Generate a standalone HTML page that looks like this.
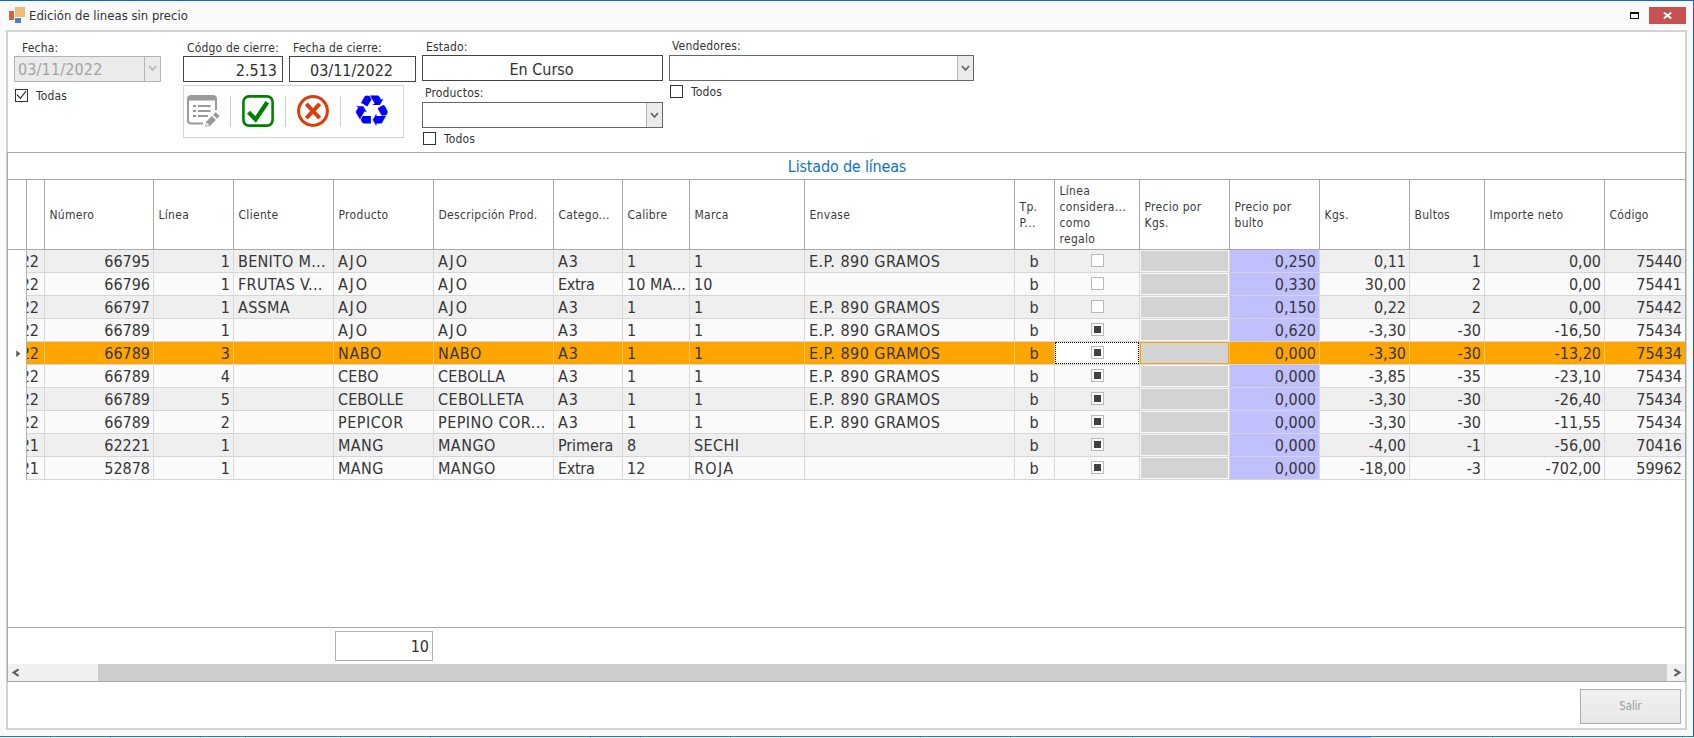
<!DOCTYPE html>
<html lang="es"><head><meta charset="utf-8"><title>Edición de lineas sin precio</title>
<style>
html,body{margin:0;padding:0}
body{width:1694px;height:738px;position:relative;overflow:hidden;background:#fafafa;font-family:"DejaVu Sans Condensed","Liberation Sans",sans-serif;color:#333;-webkit-font-smoothing:antialiased}
.a{position:absolute;box-sizing:border-box;white-space:nowrap}
.lbl{font-size:12px;letter-spacing:.17px;line-height:14px;color:#333}
.t16{font-size:16px;line-height:22px;color:#303030}
.inp{background:#fff;border:1px solid #444}
.cb{width:13px;height:13px;border:1px solid #333;background:#fff}
.vl{width:1px;background:#a9a9a9}
.hl{height:1px;background:#a9a9a9}
.dvl{width:1px;background:#d9d9d9}
.dhl{height:1px;background:#d6d6d6}
.hd{font-size:12px;letter-spacing:.3px;line-height:16px;color:#3c3c3c;display:flex;align-items:center;white-space:normal;padding-left:4.5px}
.c{font-size:16px;line-height:24px;height:22px;color:#363636;overflow:hidden}
.r{text-align:right;padding-right:3px}
.l{text-align:left;padding-left:4px}
.ctr{text-align:center;padding-right:1px}
.gck{width:13px;height:13px;border:1px solid #b9b9b9;background:#fff}
.gck i{position:absolute;left:2px;top:2px;width:7px;height:7px;background:#404040}
.ddb{background:#ebebeb;border-left:1px solid #b5b5b5}

</style></head><body>
<div class="a" style="left:0;top:0;width:1694px;height:1px;background:#0f6acb"></div>
<div class="a" style="left:1693px;top:0;width:1px;height:737px;background:#0f6acb"></div>
<div class="a" style="left:0;top:736px;width:1694px;height:1px;background:#1b7ad0"></div>
<div class="a" style="left:0;top:737px;width:1694px;height:1px;background:#fdfdfd"></div>
<div class="a" style="left:1250px;top:737px;width:121px;height:1px;background:#c4c4ff"></div>
<div class="a" style="left:50px;top:737px;width:1px;height:1px;background:#c8c8c8"></div>
<div class="a" style="left:110px;top:737px;width:1px;height:1px;background:#c8c8c8"></div>
<div class="a" style="left:200px;top:737px;width:1px;height:1px;background:#c8c8c8"></div>
<div class="a" style="left:245px;top:737px;width:1px;height:1px;background:#c8c8c8"></div>
<div class="a" style="left:340px;top:737px;width:1px;height:1px;background:#c8c8c8"></div>
<div class="a" style="left:430px;top:737px;width:1px;height:1px;background:#c8c8c8"></div>
<div class="a" style="left:590px;top:737px;width:1px;height:1px;background:#c8c8c8"></div>
<div class="a" style="left:640px;top:737px;width:1px;height:1px;background:#c8c8c8"></div>
<div class="a" style="left:730px;top:737px;width:1px;height:1px;background:#c8c8c8"></div>
<div class="a" style="left:780px;top:737px;width:1px;height:1px;background:#c8c8c8"></div>
<div class="a" style="left:920px;top:737px;width:1px;height:1px;background:#c8c8c8"></div>
<div class="a" style="left:1010px;top:737px;width:1px;height:1px;background:#c8c8c8"></div>
<div class="a" style="left:1132px;top:737px;width:1px;height:1px;background:#c8c8c8"></div>
<div class="a" style="left:1492px;top:737px;width:1px;height:1px;background:#c8c8c8"></div>
<div class="a" style="left:1572px;top:737px;width:1px;height:1px;background:#c8c8c8"></div>
<div class="a" style="left:1682px;top:737px;width:1px;height:1px;background:#c8c8c8"></div>
<div class="a" style="left:9px;top:11px;width:5px;height:9px;background:#dc5f3c"></div>
<div class="a" style="left:15px;top:7px;width:10px;height:10px;background:#ecbd77"></div>
<div class="a" style="left:15px;top:18px;width:6px;height:5px;background:#4a7fc1"></div>
<div class="a" style="left:29px;top:7px;font-size:13px;line-height:17px;color:#333">Edición de lineas sin precio</div>
<div class="a" style="left:1630px;top:12px;width:9px;height:7px;border:1px solid #111;border-top-width:2px"></div>
<div class="a" style="left:1649px;top:7px;width:37px;height:17px;background:#c75050"></div>
<svg class="a" style="left:1662px;top:11px" width="11" height="9" viewBox="0 0 11 9"><path d="M1.8 1.4 L9.2 7.6 M9.2 1.4 L1.8 7.6" stroke="#fff" stroke-width="1.9" fill="none"/></svg>
<div class="a" style="left:6px;top:30px;width:1681px;height:700px;border:2px solid #d2d2d2;background:#fff"></div>
<div class="a lbl" style="left:22px;top:41px">Fecha:</div>
<div class="a" style="left:14px;top:56px;width:147px;height:26px;border:1px solid #b4b4b4;background:#ebebeb"></div>
<div class="a t16" style="left:18px;top:59px;color:#a3a3a3;letter-spacing:.15px">03/11/2022</div>
<div class="a" style="left:144px;top:57px;width:1px;height:24px;background:#b4b4b4"></div>
<svg class="a" style="left:148px;top:65px" width="9" height="7" viewBox="0 0 9 7"><path d="M1 1 L4.5 5 L8 1" stroke="#b5b5b5" stroke-width="1.6" fill="none"/></svg>
<div class="a cb" style="left:15px;top:89px"></div>
<svg class="a" style="left:15px;top:89px" width="13" height="13" viewBox="0 0 13 13"><path d="M2 5.6 L5.4 9.3 L11 2" stroke="#222" stroke-width="1.15" fill="none"/></svg>
<div class="a lbl" style="left:36px;top:89px">Todas</div>
<div class="a lbl" style="left:187px;top:41px">Códgo de cierre:</div>
<div class="a inp" style="left:183px;top:56px;width:100px;height:26px"></div>
<div class="a t16" style="left:183px;top:60px;width:94px;text-align:right">2.513</div>
<div class="a lbl" style="left:293px;top:41px">Fecha de cierre:</div>
<div class="a inp" style="left:289px;top:56px;width:127px;height:26px"></div>
<div class="a t16" style="left:289px;top:60px;width:127px;text-align:center;text-indent:-2px">03/11/2022</div>
<div class="a lbl" style="left:426px;top:40px">Estado:</div>
<div class="a inp" style="left:422px;top:55px;width:241px;height:26px"></div>
<div class="a t16" style="left:421px;top:59px;width:241px;text-align:center">En Curso</div>
<div class="a lbl" style="left:425px;top:86px">Productos:</div>
<div class="a inp" style="left:422px;top:102px;width:241px;height:26px;border-color:#666"></div>
<div class="a ddb" style="left:646px;top:103px;width:16px;height:24px"></div>
<svg class="a" style="left:650px;top:112px" width="9" height="7" viewBox="0 0 9 7"><path d="M1 1 L4.5 5 L8 1" stroke="#666" stroke-width="1.8" fill="none"/></svg>
<div class="a cb" style="left:423px;top:132px"></div>
<div class="a lbl" style="left:444px;top:132px">Todos</div>
<div class="a lbl" style="left:672px;top:39px">Vendedores:</div>
<div class="a inp" style="left:669px;top:55px;width:305px;height:26px;border-color:#666"></div>
<div class="a ddb" style="left:957px;top:56px;width:16px;height:24px"></div>
<svg class="a" style="left:961px;top:65px" width="9" height="7" viewBox="0 0 9 7"><path d="M1 1 L4.5 5 L8 1" stroke="#666" stroke-width="1.8" fill="none"/></svg>
<div class="a cb" style="left:670px;top:85px"></div>
<div class="a lbl" style="left:691px;top:85px">Todos</div>
<div class="a" style="left:183px;top:85px;width:221px;height:53px;border:1px solid #d4d4d4;background:#fefefe"></div>
<div class="a" style="left:230px;top:96px;width:1px;height:31px;background:#d0d0d0"></div>
<div class="a" style="left:285px;top:96px;width:1px;height:31px;background:#d0d0d0"></div>
<div class="a" style="left:340px;top:96px;width:1px;height:31px;background:#d0d0d0"></div>
<svg class="a" style="left:187px;top:95px" width="33" height="32" viewBox="0 0 33 32"><path d="M16 28.5 H4 A3 3 0 0 1 1 25.5 V4 A3 3 0 0 1 4 1 H26 A3 3 0 0 1 29 4 V15" fill="none" stroke="#9a9a9a" stroke-width="2"/><rect x="1" y="1" width="28" height="4.5" fill="#9a9a9a"/><g fill="#9a9a9a"><rect x="6" y="10" width="3" height="2"/><rect x="11" y="10" width="12.5" height="2"/><rect x="6" y="15" width="3" height="2"/><rect x="11" y="15" width="12.5" height="2"/><rect x="6" y="20" width="3" height="2"/><rect x="11" y="20" width="10" height="2"/></g><path d="M18.2 31.8 L19.2 26.7 L24.9 21 L28.9 25 L23.2 30.7 Z M26.1 19.8 L28.7 17.2 L32.6 21.1 L30 23.7 Z" fill="#9a9a9a"/><path d="M19.9 27.6 L22.3 30 L19.2 30.8 Z" fill="#fff"/></svg>
<svg class="a" style="left:242px;top:95px" width="32" height="32" viewBox="0 0 32 32"><rect x="1.4" y="1.4" width="29.2" height="29.2" rx="5.5" fill="none" stroke="#008000" stroke-width="2.6"/><path d="M6.5 17.3 L13.6 24.4 L25.3 7.2" fill="none" stroke="#008000" stroke-width="4.3"/></svg>
<svg class="a" style="left:297px;top:95px" width="32" height="32" viewBox="0 0 32 32"><circle cx="16" cy="16" r="14.4" fill="none" stroke="#df3c05" stroke-width="3"/><path d="M9.3 8.8 L22.7 23.2 M22.7 8.8 L9.3 23.2" stroke="#df3c05" stroke-width="3.9" fill="none"/></svg>
<div class="a" style="left:346.5px;top:86.2px;width:50px;height:50px;font-family:'DejaVu Sans',sans-serif;font-size:43.5px;line-height:50px;color:#0000ff;text-align:center">♻</div>
<div class="a" style="left:7px;top:152px;width:1679px;height:530px;border:1px solid #a9a9a9;background:#fff"></div>
<div class="a t16" style="left:9px;top:155px;width:1676px;text-align:center;color:#0f72c6;line-height:24px;letter-spacing:-.18px">Listado de líneas</div>
<div class="a hl" style="left:8px;top:179px;width:1677px"></div>
<div class="a hl" style="left:8px;top:249px;width:1677px"></div>
<div class="a vl" style="left:26px;top:180px;height:69px"></div>
<div class="a vl" style="left:44px;top:180px;height:69px"></div>
<div class="a hd" style="left:45px;top:180px;width:108px;height:69px"><span>Número</span></div>
<div class="a vl" style="left:153px;top:180px;height:69px"></div>
<div class="a hd" style="left:154px;top:180px;width:79px;height:69px"><span>Línea</span></div>
<div class="a vl" style="left:233px;top:180px;height:69px"></div>
<div class="a hd" style="left:234px;top:180px;width:99px;height:69px"><span>Cliente</span></div>
<div class="a vl" style="left:333px;top:180px;height:69px"></div>
<div class="a hd" style="left:334px;top:180px;width:99px;height:69px"><span>Producto</span></div>
<div class="a vl" style="left:433px;top:180px;height:69px"></div>
<div class="a hd" style="left:434px;top:180px;width:119px;height:69px"><span>Descripción Prod.</span></div>
<div class="a vl" style="left:553px;top:180px;height:69px"></div>
<div class="a hd" style="left:554px;top:180px;width:68px;height:69px"><span>Catego...</span></div>
<div class="a vl" style="left:622px;top:180px;height:69px"></div>
<div class="a hd" style="left:623px;top:180px;width:66px;height:69px"><span>Calibre</span></div>
<div class="a vl" style="left:689px;top:180px;height:69px"></div>
<div class="a hd" style="left:690px;top:180px;width:114px;height:69px"><span>Marca</span></div>
<div class="a vl" style="left:804px;top:180px;height:69px"></div>
<div class="a hd" style="left:805px;top:180px;width:209px;height:69px"><span>Envase</span></div>
<div class="a vl" style="left:1014px;top:180px;height:69px"></div>
<div class="a hd" style="left:1015px;top:180px;width:39px;height:69px"><span>Tp.<br>P...</span></div>
<div class="a vl" style="left:1054px;top:180px;height:69px"></div>
<div class="a hd" style="left:1055px;top:180px;width:84px;height:69px"><span>Línea<br>considera...<br>como<br>regalo</span></div>
<div class="a vl" style="left:1139px;top:180px;height:69px"></div>
<div class="a hd" style="left:1140px;top:180px;width:89px;height:69px"><span>Precio por<br>Kgs.</span></div>
<div class="a vl" style="left:1229px;top:180px;height:69px"></div>
<div class="a hd" style="left:1230px;top:180px;width:89px;height:69px"><span>Precio por<br>bulto</span></div>
<div class="a vl" style="left:1319px;top:180px;height:69px"></div>
<div class="a hd" style="left:1320px;top:180px;width:89px;height:69px"><span>Kgs.</span></div>
<div class="a vl" style="left:1409px;top:180px;height:69px"></div>
<div class="a hd" style="left:1410px;top:180px;width:74px;height:69px"><span>Bultos</span></div>
<div class="a vl" style="left:1484px;top:180px;height:69px"></div>
<div class="a hd" style="left:1485px;top:180px;width:119px;height:69px"><span>Importe neto</span></div>
<div class="a vl" style="left:1604px;top:180px;height:69px"></div>
<div class="a hd" style="left:1605px;top:180px;width:80px;height:69px"><span>Código</span></div>
<div class="a" style="left:27px;top:250px;width:1658px;height:22px;background:#efefef"></div>
<div class="a dhl" style="left:27px;top:272px;width:1658px"></div>
<div class="a c" style="left:27px;top:250px;width:17px"><span class="a" style="right:5px;top:0">2022</span></div>
<div class="a dvl" style="left:44px;top:250px;height:22px"></div>
<div class="a c r" style="left:45px;top:250px;width:108px">66795</div>
<div class="a dvl" style="left:153px;top:250px;height:22px"></div>
<div class="a c r" style="left:154px;top:250px;width:79px">1</div>
<div class="a dvl" style="left:233px;top:250px;height:22px"></div>
<div class="a c l" style="left:234px;top:250px;width:99px;letter-spacing:0.27px">BENITO M...</div>
<div class="a dvl" style="left:333px;top:250px;height:22px"></div>
<div class="a c l" style="left:334px;top:250px;width:99px;letter-spacing:1.78px">AJO</div>
<div class="a dvl" style="left:433px;top:250px;height:22px"></div>
<div class="a c l" style="left:434px;top:250px;width:119px;letter-spacing:1.78px">AJO</div>
<div class="a dvl" style="left:553px;top:250px;height:22px"></div>
<div class="a c l" style="left:554px;top:250px;width:68px;letter-spacing:0.88px">A3</div>
<div class="a dvl" style="left:622px;top:250px;height:22px"></div>
<div class="a c l" style="left:623px;top:250px;width:66px">1</div>
<div class="a dvl" style="left:689px;top:250px;height:22px"></div>
<div class="a c l" style="left:690px;top:250px;width:114px">1</div>
<div class="a dvl" style="left:804px;top:250px;height:22px"></div>
<div class="a c l" style="left:805px;top:250px;width:209px;letter-spacing:0.48px">E.P. 890 GRAMOS</div>
<div class="a dvl" style="left:1014px;top:250px;height:22px"></div>
<div class="a c ctr" style="left:1015px;top:250px;width:39px">b</div>
<div class="a dvl" style="left:1054px;top:250px;height:22px"></div>
<div class="a gck" style="left:1091px;top:254px"></div>
<div class="a dvl" style="left:1139px;top:250px;height:22px"></div>
<div class="a" style="left:1140px;top:250px;width:89px;height:22px;border:1px solid #f4f4f4;background:#d3d3d3"></div>
<div class="a dvl" style="left:1229px;top:250px;height:22px"></div>
<div class="a c r" style="left:1230px;top:250px;width:89px;background:#c0c0ff">0,250</div>
<div class="a dvl" style="left:1319px;top:250px;height:22px"></div>
<div class="a c r" style="left:1320px;top:250px;width:89px">0,11</div>
<div class="a dvl" style="left:1409px;top:250px;height:22px"></div>
<div class="a c r" style="left:1410px;top:250px;width:74px">1</div>
<div class="a dvl" style="left:1484px;top:250px;height:22px"></div>
<div class="a c r" style="left:1485px;top:250px;width:119px">0,00</div>
<div class="a dvl" style="left:1604px;top:250px;height:22px"></div>
<div class="a c r" style="left:1605px;top:250px;width:80px">75440</div>
<div class="a" style="left:27px;top:273px;width:1658px;height:22px;background:#fafafa"></div>
<div class="a dhl" style="left:27px;top:295px;width:1658px"></div>
<div class="a c" style="left:27px;top:273px;width:17px"><span class="a" style="right:5px;top:0">2022</span></div>
<div class="a dvl" style="left:44px;top:273px;height:22px"></div>
<div class="a c r" style="left:45px;top:273px;width:108px">66796</div>
<div class="a dvl" style="left:153px;top:273px;height:22px"></div>
<div class="a c r" style="left:154px;top:273px;width:79px">1</div>
<div class="a dvl" style="left:233px;top:273px;height:22px"></div>
<div class="a c l" style="left:234px;top:273px;width:99px;letter-spacing:0.30px">FRUTAS V...</div>
<div class="a dvl" style="left:333px;top:273px;height:22px"></div>
<div class="a c l" style="left:334px;top:273px;width:99px;letter-spacing:1.78px">AJO</div>
<div class="a dvl" style="left:433px;top:273px;height:22px"></div>
<div class="a c l" style="left:434px;top:273px;width:119px;letter-spacing:1.78px">AJO</div>
<div class="a dvl" style="left:553px;top:273px;height:22px"></div>
<div class="a c l" style="left:554px;top:273px;width:68px;letter-spacing:-0.30px">Extra</div>
<div class="a dvl" style="left:622px;top:273px;height:22px"></div>
<div class="a c l" style="left:623px;top:273px;width:66px;letter-spacing:0.05px">10 MA...</div>
<div class="a dvl" style="left:689px;top:273px;height:22px"></div>
<div class="a c l" style="left:690px;top:273px;width:114px">10</div>
<div class="a dvl" style="left:804px;top:273px;height:22px"></div>
<div class="a c l" style="left:805px;top:273px;width:209px"></div>
<div class="a dvl" style="left:1014px;top:273px;height:22px"></div>
<div class="a c ctr" style="left:1015px;top:273px;width:39px">b</div>
<div class="a dvl" style="left:1054px;top:273px;height:22px"></div>
<div class="a gck" style="left:1091px;top:277px"></div>
<div class="a dvl" style="left:1139px;top:273px;height:22px"></div>
<div class="a" style="left:1140px;top:273px;width:89px;height:22px;border:1px solid #fcfcfc;background:#d3d3d3"></div>
<div class="a dvl" style="left:1229px;top:273px;height:22px"></div>
<div class="a c r" style="left:1230px;top:273px;width:89px;background:#c0c0ff">0,330</div>
<div class="a dvl" style="left:1319px;top:273px;height:22px"></div>
<div class="a c r" style="left:1320px;top:273px;width:89px">30,00</div>
<div class="a dvl" style="left:1409px;top:273px;height:22px"></div>
<div class="a c r" style="left:1410px;top:273px;width:74px">2</div>
<div class="a dvl" style="left:1484px;top:273px;height:22px"></div>
<div class="a c r" style="left:1485px;top:273px;width:119px">0,00</div>
<div class="a dvl" style="left:1604px;top:273px;height:22px"></div>
<div class="a c r" style="left:1605px;top:273px;width:80px">75441</div>
<div class="a" style="left:27px;top:296px;width:1658px;height:22px;background:#efefef"></div>
<div class="a dhl" style="left:27px;top:318px;width:1658px"></div>
<div class="a c" style="left:27px;top:296px;width:17px"><span class="a" style="right:5px;top:0">2022</span></div>
<div class="a dvl" style="left:44px;top:296px;height:22px"></div>
<div class="a c r" style="left:45px;top:296px;width:108px">66797</div>
<div class="a dvl" style="left:153px;top:296px;height:22px"></div>
<div class="a c r" style="left:154px;top:296px;width:79px">1</div>
<div class="a dvl" style="left:233px;top:296px;height:22px"></div>
<div class="a c l" style="left:234px;top:296px;width:99px;letter-spacing:0.30px">ASSMA</div>
<div class="a dvl" style="left:333px;top:296px;height:22px"></div>
<div class="a c l" style="left:334px;top:296px;width:99px;letter-spacing:1.78px">AJO</div>
<div class="a dvl" style="left:433px;top:296px;height:22px"></div>
<div class="a c l" style="left:434px;top:296px;width:119px;letter-spacing:1.78px">AJO</div>
<div class="a dvl" style="left:553px;top:296px;height:22px"></div>
<div class="a c l" style="left:554px;top:296px;width:68px;letter-spacing:0.88px">A3</div>
<div class="a dvl" style="left:622px;top:296px;height:22px"></div>
<div class="a c l" style="left:623px;top:296px;width:66px">1</div>
<div class="a dvl" style="left:689px;top:296px;height:22px"></div>
<div class="a c l" style="left:690px;top:296px;width:114px">1</div>
<div class="a dvl" style="left:804px;top:296px;height:22px"></div>
<div class="a c l" style="left:805px;top:296px;width:209px;letter-spacing:0.48px">E.P. 890 GRAMOS</div>
<div class="a dvl" style="left:1014px;top:296px;height:22px"></div>
<div class="a c ctr" style="left:1015px;top:296px;width:39px">b</div>
<div class="a dvl" style="left:1054px;top:296px;height:22px"></div>
<div class="a gck" style="left:1091px;top:300px"></div>
<div class="a dvl" style="left:1139px;top:296px;height:22px"></div>
<div class="a" style="left:1140px;top:296px;width:89px;height:22px;border:1px solid #f4f4f4;background:#d3d3d3"></div>
<div class="a dvl" style="left:1229px;top:296px;height:22px"></div>
<div class="a c r" style="left:1230px;top:296px;width:89px;background:#c0c0ff">0,150</div>
<div class="a dvl" style="left:1319px;top:296px;height:22px"></div>
<div class="a c r" style="left:1320px;top:296px;width:89px">0,22</div>
<div class="a dvl" style="left:1409px;top:296px;height:22px"></div>
<div class="a c r" style="left:1410px;top:296px;width:74px">2</div>
<div class="a dvl" style="left:1484px;top:296px;height:22px"></div>
<div class="a c r" style="left:1485px;top:296px;width:119px">0,00</div>
<div class="a dvl" style="left:1604px;top:296px;height:22px"></div>
<div class="a c r" style="left:1605px;top:296px;width:80px">75442</div>
<div class="a" style="left:27px;top:319px;width:1658px;height:22px;background:#fafafa"></div>
<div class="a dhl" style="left:27px;top:341px;width:1658px"></div>
<div class="a c" style="left:27px;top:319px;width:17px"><span class="a" style="right:5px;top:0">2022</span></div>
<div class="a dvl" style="left:44px;top:319px;height:22px"></div>
<div class="a c r" style="left:45px;top:319px;width:108px">66789</div>
<div class="a dvl" style="left:153px;top:319px;height:22px"></div>
<div class="a c r" style="left:154px;top:319px;width:79px">1</div>
<div class="a dvl" style="left:233px;top:319px;height:22px"></div>
<div class="a c l" style="left:234px;top:319px;width:99px"></div>
<div class="a dvl" style="left:333px;top:319px;height:22px"></div>
<div class="a c l" style="left:334px;top:319px;width:99px;letter-spacing:1.78px">AJO</div>
<div class="a dvl" style="left:433px;top:319px;height:22px"></div>
<div class="a c l" style="left:434px;top:319px;width:119px;letter-spacing:1.78px">AJO</div>
<div class="a dvl" style="left:553px;top:319px;height:22px"></div>
<div class="a c l" style="left:554px;top:319px;width:68px;letter-spacing:0.88px">A3</div>
<div class="a dvl" style="left:622px;top:319px;height:22px"></div>
<div class="a c l" style="left:623px;top:319px;width:66px">1</div>
<div class="a dvl" style="left:689px;top:319px;height:22px"></div>
<div class="a c l" style="left:690px;top:319px;width:114px">1</div>
<div class="a dvl" style="left:804px;top:319px;height:22px"></div>
<div class="a c l" style="left:805px;top:319px;width:209px;letter-spacing:0.48px">E.P. 890 GRAMOS</div>
<div class="a dvl" style="left:1014px;top:319px;height:22px"></div>
<div class="a c ctr" style="left:1015px;top:319px;width:39px">b</div>
<div class="a dvl" style="left:1054px;top:319px;height:22px"></div>
<div class="a gck" style="left:1091px;top:323px"><i class="a"></i></div>
<div class="a dvl" style="left:1139px;top:319px;height:22px"></div>
<div class="a" style="left:1140px;top:319px;width:89px;height:22px;border:1px solid #fcfcfc;background:#d3d3d3"></div>
<div class="a dvl" style="left:1229px;top:319px;height:22px"></div>
<div class="a c r" style="left:1230px;top:319px;width:89px;background:#c0c0ff">0,620</div>
<div class="a dvl" style="left:1319px;top:319px;height:22px"></div>
<div class="a c r" style="left:1320px;top:319px;width:89px">-3,30</div>
<div class="a dvl" style="left:1409px;top:319px;height:22px"></div>
<div class="a c r" style="left:1410px;top:319px;width:74px">-30</div>
<div class="a dvl" style="left:1484px;top:319px;height:22px"></div>
<div class="a c r" style="left:1485px;top:319px;width:119px">-16,50</div>
<div class="a dvl" style="left:1604px;top:319px;height:22px"></div>
<div class="a c r" style="left:1605px;top:319px;width:80px">75434</div>
<div class="a" style="left:27px;top:342px;width:1658px;height:22px;background:#ffa500"></div>
<div class="a dhl" style="left:27px;top:364px;width:1658px"></div>
<div class="a c" style="left:27px;top:342px;width:17px"><span class="a" style="right:5px;top:0">2022</span></div>
<div class="a dvl" style="left:44px;top:342px;height:22px;background:#ffc864"></div>
<div class="a c r" style="left:45px;top:342px;width:108px">66789</div>
<div class="a dvl" style="left:153px;top:342px;height:22px;background:#ffc864"></div>
<div class="a c r" style="left:154px;top:342px;width:79px">3</div>
<div class="a dvl" style="left:233px;top:342px;height:22px;background:#ffc864"></div>
<div class="a c l" style="left:234px;top:342px;width:99px"></div>
<div class="a dvl" style="left:333px;top:342px;height:22px;background:#ffc864"></div>
<div class="a c l" style="left:334px;top:342px;width:99px;letter-spacing:0.62px">NABO</div>
<div class="a dvl" style="left:433px;top:342px;height:22px;background:#ffc864"></div>
<div class="a c l" style="left:434px;top:342px;width:119px;letter-spacing:0.62px">NABO</div>
<div class="a dvl" style="left:553px;top:342px;height:22px;background:#ffc864"></div>
<div class="a c l" style="left:554px;top:342px;width:68px;letter-spacing:0.88px">A3</div>
<div class="a dvl" style="left:622px;top:342px;height:22px;background:#ffc864"></div>
<div class="a c l" style="left:623px;top:342px;width:66px">1</div>
<div class="a dvl" style="left:689px;top:342px;height:22px;background:#ffc864"></div>
<div class="a c l" style="left:690px;top:342px;width:114px">1</div>
<div class="a dvl" style="left:804px;top:342px;height:22px;background:#ffc864"></div>
<div class="a c l" style="left:805px;top:342px;width:209px;letter-spacing:0.48px">E.P. 890 GRAMOS</div>
<div class="a dvl" style="left:1014px;top:342px;height:22px;background:#ffc864"></div>
<div class="a c ctr" style="left:1015px;top:342px;width:39px">b</div>
<div class="a dvl" style="left:1054px;top:342px;height:22px;background:#ffc864"></div>
<div class="a" style="left:1055px;top:342px;width:84px;height:22px;background:#fff;border:1px dotted #000"></div>
<div class="a gck" style="left:1091px;top:346px"><i class="a"></i></div>
<div class="a dvl" style="left:1139px;top:342px;height:22px;background:#ffc864"></div>
<div class="a" style="left:1140px;top:342px;width:89px;height:22px;border:1px solid #ffa500;background:#d3d3d3"></div>
<div class="a dvl" style="left:1229px;top:342px;height:22px;background:#ffc864"></div>
<div class="a c r" style="left:1230px;top:342px;width:89px;">0,000</div>
<div class="a dvl" style="left:1319px;top:342px;height:22px;background:#ffc864"></div>
<div class="a c r" style="left:1320px;top:342px;width:89px">-3,30</div>
<div class="a dvl" style="left:1409px;top:342px;height:22px;background:#ffc864"></div>
<div class="a c r" style="left:1410px;top:342px;width:74px">-30</div>
<div class="a dvl" style="left:1484px;top:342px;height:22px;background:#ffc864"></div>
<div class="a c r" style="left:1485px;top:342px;width:119px">-13,20</div>
<div class="a dvl" style="left:1604px;top:342px;height:22px;background:#ffc864"></div>
<div class="a c r" style="left:1605px;top:342px;width:80px">75434</div>
<div class="a" style="left:27px;top:365px;width:1658px;height:22px;background:#fafafa"></div>
<div class="a dhl" style="left:27px;top:387px;width:1658px"></div>
<div class="a c" style="left:27px;top:365px;width:17px"><span class="a" style="right:5px;top:0">2022</span></div>
<div class="a dvl" style="left:44px;top:365px;height:22px"></div>
<div class="a c r" style="left:45px;top:365px;width:108px">66789</div>
<div class="a dvl" style="left:153px;top:365px;height:22px"></div>
<div class="a c r" style="left:154px;top:365px;width:79px">4</div>
<div class="a dvl" style="left:233px;top:365px;height:22px"></div>
<div class="a c l" style="left:234px;top:365px;width:99px"></div>
<div class="a dvl" style="left:333px;top:365px;height:22px"></div>
<div class="a c l" style="left:334px;top:365px;width:99px;letter-spacing:0.17px">CEBO</div>
<div class="a dvl" style="left:433px;top:365px;height:22px"></div>
<div class="a c l" style="left:434px;top:365px;width:119px;letter-spacing:0.13px">CEBOLLA</div>
<div class="a dvl" style="left:553px;top:365px;height:22px"></div>
<div class="a c l" style="left:554px;top:365px;width:68px;letter-spacing:0.88px">A3</div>
<div class="a dvl" style="left:622px;top:365px;height:22px"></div>
<div class="a c l" style="left:623px;top:365px;width:66px">1</div>
<div class="a dvl" style="left:689px;top:365px;height:22px"></div>
<div class="a c l" style="left:690px;top:365px;width:114px">1</div>
<div class="a dvl" style="left:804px;top:365px;height:22px"></div>
<div class="a c l" style="left:805px;top:365px;width:209px;letter-spacing:0.48px">E.P. 890 GRAMOS</div>
<div class="a dvl" style="left:1014px;top:365px;height:22px"></div>
<div class="a c ctr" style="left:1015px;top:365px;width:39px">b</div>
<div class="a dvl" style="left:1054px;top:365px;height:22px"></div>
<div class="a gck" style="left:1091px;top:369px"><i class="a"></i></div>
<div class="a dvl" style="left:1139px;top:365px;height:22px"></div>
<div class="a" style="left:1140px;top:365px;width:89px;height:22px;border:1px solid #fcfcfc;background:#d3d3d3"></div>
<div class="a dvl" style="left:1229px;top:365px;height:22px"></div>
<div class="a c r" style="left:1230px;top:365px;width:89px;background:#c0c0ff">0,000</div>
<div class="a dvl" style="left:1319px;top:365px;height:22px"></div>
<div class="a c r" style="left:1320px;top:365px;width:89px">-3,85</div>
<div class="a dvl" style="left:1409px;top:365px;height:22px"></div>
<div class="a c r" style="left:1410px;top:365px;width:74px">-35</div>
<div class="a dvl" style="left:1484px;top:365px;height:22px"></div>
<div class="a c r" style="left:1485px;top:365px;width:119px">-23,10</div>
<div class="a dvl" style="left:1604px;top:365px;height:22px"></div>
<div class="a c r" style="left:1605px;top:365px;width:80px">75434</div>
<div class="a" style="left:27px;top:388px;width:1658px;height:22px;background:#efefef"></div>
<div class="a dhl" style="left:27px;top:410px;width:1658px"></div>
<div class="a c" style="left:27px;top:388px;width:17px"><span class="a" style="right:5px;top:0">2022</span></div>
<div class="a dvl" style="left:44px;top:388px;height:22px"></div>
<div class="a c r" style="left:45px;top:388px;width:108px">66789</div>
<div class="a dvl" style="left:153px;top:388px;height:22px"></div>
<div class="a c r" style="left:154px;top:388px;width:79px">5</div>
<div class="a dvl" style="left:233px;top:388px;height:22px"></div>
<div class="a c l" style="left:234px;top:388px;width:99px"></div>
<div class="a dvl" style="left:333px;top:388px;height:22px"></div>
<div class="a c l" style="left:334px;top:388px;width:99px;letter-spacing:0.08px">CEBOLLE</div>
<div class="a dvl" style="left:433px;top:388px;height:22px"></div>
<div class="a c l" style="left:434px;top:388px;width:119px;letter-spacing:0.38px">CEBOLLETA</div>
<div class="a dvl" style="left:553px;top:388px;height:22px"></div>
<div class="a c l" style="left:554px;top:388px;width:68px;letter-spacing:0.88px">A3</div>
<div class="a dvl" style="left:622px;top:388px;height:22px"></div>
<div class="a c l" style="left:623px;top:388px;width:66px">1</div>
<div class="a dvl" style="left:689px;top:388px;height:22px"></div>
<div class="a c l" style="left:690px;top:388px;width:114px">1</div>
<div class="a dvl" style="left:804px;top:388px;height:22px"></div>
<div class="a c l" style="left:805px;top:388px;width:209px;letter-spacing:0.48px">E.P. 890 GRAMOS</div>
<div class="a dvl" style="left:1014px;top:388px;height:22px"></div>
<div class="a c ctr" style="left:1015px;top:388px;width:39px">b</div>
<div class="a dvl" style="left:1054px;top:388px;height:22px"></div>
<div class="a gck" style="left:1091px;top:392px"><i class="a"></i></div>
<div class="a dvl" style="left:1139px;top:388px;height:22px"></div>
<div class="a" style="left:1140px;top:388px;width:89px;height:22px;border:1px solid #f4f4f4;background:#d3d3d3"></div>
<div class="a dvl" style="left:1229px;top:388px;height:22px"></div>
<div class="a c r" style="left:1230px;top:388px;width:89px;background:#c0c0ff">0,000</div>
<div class="a dvl" style="left:1319px;top:388px;height:22px"></div>
<div class="a c r" style="left:1320px;top:388px;width:89px">-3,30</div>
<div class="a dvl" style="left:1409px;top:388px;height:22px"></div>
<div class="a c r" style="left:1410px;top:388px;width:74px">-30</div>
<div class="a dvl" style="left:1484px;top:388px;height:22px"></div>
<div class="a c r" style="left:1485px;top:388px;width:119px">-26,40</div>
<div class="a dvl" style="left:1604px;top:388px;height:22px"></div>
<div class="a c r" style="left:1605px;top:388px;width:80px">75434</div>
<div class="a" style="left:27px;top:411px;width:1658px;height:22px;background:#fafafa"></div>
<div class="a dhl" style="left:27px;top:433px;width:1658px"></div>
<div class="a c" style="left:27px;top:411px;width:17px"><span class="a" style="right:5px;top:0">2022</span></div>
<div class="a dvl" style="left:44px;top:411px;height:22px"></div>
<div class="a c r" style="left:45px;top:411px;width:108px">66789</div>
<div class="a dvl" style="left:153px;top:411px;height:22px"></div>
<div class="a c r" style="left:154px;top:411px;width:79px">2</div>
<div class="a dvl" style="left:233px;top:411px;height:22px"></div>
<div class="a c l" style="left:234px;top:411px;width:99px"></div>
<div class="a dvl" style="left:333px;top:411px;height:22px"></div>
<div class="a c l" style="left:334px;top:411px;width:99px;letter-spacing:0.52px">PEPICOR</div>
<div class="a dvl" style="left:433px;top:411px;height:22px"></div>
<div class="a c l" style="left:434px;top:411px;width:119px;letter-spacing:0.45px">PEPINO COR...</div>
<div class="a dvl" style="left:553px;top:411px;height:22px"></div>
<div class="a c l" style="left:554px;top:411px;width:68px;letter-spacing:0.88px">A3</div>
<div class="a dvl" style="left:622px;top:411px;height:22px"></div>
<div class="a c l" style="left:623px;top:411px;width:66px">1</div>
<div class="a dvl" style="left:689px;top:411px;height:22px"></div>
<div class="a c l" style="left:690px;top:411px;width:114px">1</div>
<div class="a dvl" style="left:804px;top:411px;height:22px"></div>
<div class="a c l" style="left:805px;top:411px;width:209px;letter-spacing:0.48px">E.P. 890 GRAMOS</div>
<div class="a dvl" style="left:1014px;top:411px;height:22px"></div>
<div class="a c ctr" style="left:1015px;top:411px;width:39px">b</div>
<div class="a dvl" style="left:1054px;top:411px;height:22px"></div>
<div class="a gck" style="left:1091px;top:415px"><i class="a"></i></div>
<div class="a dvl" style="left:1139px;top:411px;height:22px"></div>
<div class="a" style="left:1140px;top:411px;width:89px;height:22px;border:1px solid #fcfcfc;background:#d3d3d3"></div>
<div class="a dvl" style="left:1229px;top:411px;height:22px"></div>
<div class="a c r" style="left:1230px;top:411px;width:89px;background:#c0c0ff">0,000</div>
<div class="a dvl" style="left:1319px;top:411px;height:22px"></div>
<div class="a c r" style="left:1320px;top:411px;width:89px">-3,30</div>
<div class="a dvl" style="left:1409px;top:411px;height:22px"></div>
<div class="a c r" style="left:1410px;top:411px;width:74px">-30</div>
<div class="a dvl" style="left:1484px;top:411px;height:22px"></div>
<div class="a c r" style="left:1485px;top:411px;width:119px">-11,55</div>
<div class="a dvl" style="left:1604px;top:411px;height:22px"></div>
<div class="a c r" style="left:1605px;top:411px;width:80px">75434</div>
<div class="a" style="left:27px;top:434px;width:1658px;height:22px;background:#efefef"></div>
<div class="a dhl" style="left:27px;top:456px;width:1658px"></div>
<div class="a c" style="left:27px;top:434px;width:17px"><span class="a" style="right:5px;top:0">2021</span></div>
<div class="a dvl" style="left:44px;top:434px;height:22px"></div>
<div class="a c r" style="left:45px;top:434px;width:108px">62221</div>
<div class="a dvl" style="left:153px;top:434px;height:22px"></div>
<div class="a c r" style="left:154px;top:434px;width:79px">1</div>
<div class="a dvl" style="left:233px;top:434px;height:22px"></div>
<div class="a c l" style="left:234px;top:434px;width:99px"></div>
<div class="a dvl" style="left:333px;top:434px;height:22px"></div>
<div class="a c l" style="left:334px;top:434px;width:99px;letter-spacing:0.39px">MANG</div>
<div class="a dvl" style="left:433px;top:434px;height:22px"></div>
<div class="a c l" style="left:434px;top:434px;width:119px;letter-spacing:0.45px">MANGO</div>
<div class="a dvl" style="left:553px;top:434px;height:22px"></div>
<div class="a c l" style="left:554px;top:434px;width:68px;letter-spacing:-0.10px">Primera</div>
<div class="a dvl" style="left:622px;top:434px;height:22px"></div>
<div class="a c l" style="left:623px;top:434px;width:66px">8</div>
<div class="a dvl" style="left:689px;top:434px;height:22px"></div>
<div class="a c l" style="left:690px;top:434px;width:114px;letter-spacing:0.38px">SECHI</div>
<div class="a dvl" style="left:804px;top:434px;height:22px"></div>
<div class="a c l" style="left:805px;top:434px;width:209px"></div>
<div class="a dvl" style="left:1014px;top:434px;height:22px"></div>
<div class="a c ctr" style="left:1015px;top:434px;width:39px">b</div>
<div class="a dvl" style="left:1054px;top:434px;height:22px"></div>
<div class="a gck" style="left:1091px;top:438px"><i class="a"></i></div>
<div class="a dvl" style="left:1139px;top:434px;height:22px"></div>
<div class="a" style="left:1140px;top:434px;width:89px;height:22px;border:1px solid #f4f4f4;background:#d3d3d3"></div>
<div class="a dvl" style="left:1229px;top:434px;height:22px"></div>
<div class="a c r" style="left:1230px;top:434px;width:89px;background:#c0c0ff">0,000</div>
<div class="a dvl" style="left:1319px;top:434px;height:22px"></div>
<div class="a c r" style="left:1320px;top:434px;width:89px">-4,00</div>
<div class="a dvl" style="left:1409px;top:434px;height:22px"></div>
<div class="a c r" style="left:1410px;top:434px;width:74px">-1</div>
<div class="a dvl" style="left:1484px;top:434px;height:22px"></div>
<div class="a c r" style="left:1485px;top:434px;width:119px">-56,00</div>
<div class="a dvl" style="left:1604px;top:434px;height:22px"></div>
<div class="a c r" style="left:1605px;top:434px;width:80px">70416</div>
<div class="a" style="left:27px;top:457px;width:1658px;height:22px;background:#fafafa"></div>
<div class="a dhl" style="left:27px;top:479px;width:1658px"></div>
<div class="a c" style="left:27px;top:457px;width:17px"><span class="a" style="right:5px;top:0">2021</span></div>
<div class="a dvl" style="left:44px;top:457px;height:22px"></div>
<div class="a c r" style="left:45px;top:457px;width:108px">52878</div>
<div class="a dvl" style="left:153px;top:457px;height:22px"></div>
<div class="a c r" style="left:154px;top:457px;width:79px">1</div>
<div class="a dvl" style="left:233px;top:457px;height:22px"></div>
<div class="a c l" style="left:234px;top:457px;width:99px"></div>
<div class="a dvl" style="left:333px;top:457px;height:22px"></div>
<div class="a c l" style="left:334px;top:457px;width:99px;letter-spacing:0.39px">MANG</div>
<div class="a dvl" style="left:433px;top:457px;height:22px"></div>
<div class="a c l" style="left:434px;top:457px;width:119px;letter-spacing:0.45px">MANGO</div>
<div class="a dvl" style="left:553px;top:457px;height:22px"></div>
<div class="a c l" style="left:554px;top:457px;width:68px;letter-spacing:-0.30px">Extra</div>
<div class="a dvl" style="left:622px;top:457px;height:22px"></div>
<div class="a c l" style="left:623px;top:457px;width:66px">12</div>
<div class="a dvl" style="left:689px;top:457px;height:22px"></div>
<div class="a c l" style="left:690px;top:457px;width:114px;letter-spacing:1.28px">ROJA</div>
<div class="a dvl" style="left:804px;top:457px;height:22px"></div>
<div class="a c l" style="left:805px;top:457px;width:209px"></div>
<div class="a dvl" style="left:1014px;top:457px;height:22px"></div>
<div class="a c ctr" style="left:1015px;top:457px;width:39px">b</div>
<div class="a dvl" style="left:1054px;top:457px;height:22px"></div>
<div class="a gck" style="left:1091px;top:461px"><i class="a"></i></div>
<div class="a dvl" style="left:1139px;top:457px;height:22px"></div>
<div class="a" style="left:1140px;top:457px;width:89px;height:22px;border:1px solid #fcfcfc;background:#d3d3d3"></div>
<div class="a dvl" style="left:1229px;top:457px;height:22px"></div>
<div class="a c r" style="left:1230px;top:457px;width:89px;background:#c0c0ff">0,000</div>
<div class="a dvl" style="left:1319px;top:457px;height:22px"></div>
<div class="a c r" style="left:1320px;top:457px;width:89px">-18,00</div>
<div class="a dvl" style="left:1409px;top:457px;height:22px"></div>
<div class="a c r" style="left:1410px;top:457px;width:74px">-3</div>
<div class="a dvl" style="left:1484px;top:457px;height:22px"></div>
<div class="a c r" style="left:1485px;top:457px;width:119px">-702,00</div>
<div class="a dvl" style="left:1604px;top:457px;height:22px"></div>
<div class="a c r" style="left:1605px;top:457px;width:80px">59962</div>
<div class="a" style="left:26px;top:250px;width:1px;height:230px;background:#b2b2b2"></div>
<svg class="a" style="left:16px;top:350px" width="5" height="8" viewBox="0 0 5 8"><path d="M0.3 0.3 L4.3 3.8 L0.3 7.3 Z" fill="#555"/></svg>
<div class="a hl" style="left:8px;top:627px;width:1677px"></div>
<div class="a" style="left:335px;top:631px;width:98px;height:30px;border:1px solid #b0b0b0;background:#fff"></div>
<div class="a t16" style="left:335px;top:636px;width:94px;text-align:right">10</div>
<div class="a" style="left:8px;top:664px;width:1677px;height:17px;background:#f0f0f0"></div>
<div class="a" style="left:98px;top:664px;width:1569px;height:17px;background:#cdcdcd"></div>
<svg class="a" style="left:11px;top:668px" width="10" height="9" viewBox="0 0 10 9"><path d="M7.6 1.3 L2.6 4.6 L7.6 7.9" stroke="#5e5e5e" stroke-width="2.1" fill="none"/></svg>
<svg class="a" style="left:1672px;top:668px" width="10" height="9" viewBox="0 0 10 9"><path d="M2.4 1.3 L7.4 4.6 L2.4 7.9" stroke="#5e5e5e" stroke-width="2.1" fill="none"/></svg>
<div class="a" style="left:1580px;top:689px;width:101px;height:35px;border:1px solid #adadad;background:linear-gradient(#f2f2f2,#e6e6e6);font-size:11.4px;line-height:33px;text-align:center;color:#9c9c9c">Salir</div>
</body></html>
